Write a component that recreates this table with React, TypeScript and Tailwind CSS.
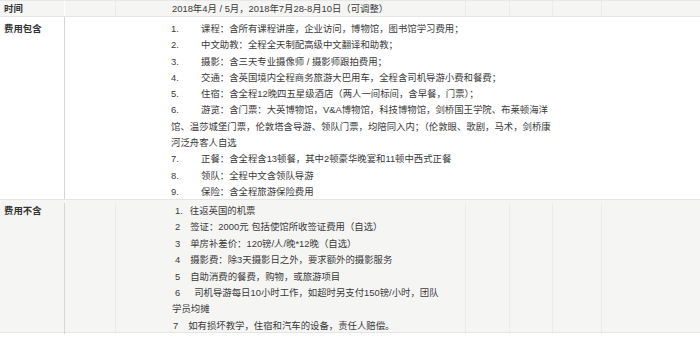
const font = { fontFamily: '"Liberation Sans", "Noto Sans CJK SC", sans-serif' }

const included: { n?: string; text: string }[] = [
  { n: '1.', text: '课程：含所有课程讲座，企业访问，博物馆，图书馆学习费用；' },
  { n: '2.', text: '中文助教：全程全天制配高级中文翻译和助教；' },
  { n: '3.', text: '摄影：含三天专业摄像师 / 摄影师跟拍费用；' },
  { n: '4.', text: '交通：含英国境内全程商务旅游大巴用车，全程含司机导游小费和餐费；' },
  { n: '5.', text: '住宿：含全程12晚四五星级酒店（两人一间标间，含早餐，门票）；' },
  { n: '6.', text: '游览：含门票：大英博物馆，V&A博物馆，科技博物馆，剑桥国王学院、布莱顿海洋' },
  { text: '馆、温莎城堡门票，伦敦塔含导游、领队门票，均陪同入内；（伦敦眼、歌剧，马术，剑桥康' },
  { text: '河泛舟客人自选' },
  { n: '7.', text: '正餐：含全程含13顿餐，其中2顿豪华晚宴和11顿中西式正餐' },
  { n: '8.', text: '领队：全程中文含领队导游' },
  { n: '9.', text: '保险：含全程旅游保险费用' },
]

const excluded: { n?: string; gap: string; text: string }[] = [
  { n: '1.', gap: 'pl-[7px]', text: '往返英国的机票' },
  { n: '2', gap: 'pl-[10px]', text: '签证：2000元 包括使馆所收签证费用（自选）' },
  { n: '3', gap: 'pl-[10px]', text: '单房补差价：120镑/人/晚*12晚（自选）' },
  { n: '4', gap: 'pl-[10px]', text: '摄影费：除3天摄影日之外，要求额外的摄影服务' },
  { n: '5', gap: 'pl-[10px]', text: '自助消费的餐费，购物，或旅游项目' },
  { n: '6', gap: 'pl-[14px]', text: '司机导游每日10小时工作，如超时另支付150镑/小时，团队' },
  { gap: '', text: '学员均摊' },
  { n: '7', gap: 'pl-[10px]', text: '如有损坏教学，住宿和汽车的设备，责任人赔偿。' },
]

function GrayRow({ label, height, children }: { label: string; height: string; children: React.ReactNode }) {
  return (
    <div className={`grid grid-cols-[65px_51px_350px_44px_43px_49px_1fr] bg-[#f5f5f4] border-b border-[#e6e6e6] ${height}`}>
      <div className="border-r border-[#d6d6d6] pl-[4px] font-bold text-[#333]">{label}</div>
      <div className="border-r border-[#ebebeb]" />
      <div className="border-r border-[#ebebeb] pl-[56px] overflow-visible whitespace-nowrap">{children}</div>
      <div className="border-r border-[#ebebeb]" />
      <div className="border-r border-[#ebebeb]" />
      <div className="border-r border-[#ebebeb]" />
      <div />
    </div>
  )
}

export default function App() {
  return (
    <div className="w-[700px] h-[339px] bg-white text-[9.4px] text-[#3a3a3a] overflow-hidden" style={font}>
      {/* 时间 */}
      <div className="border-t border-[#e8e8e8]">
        <div className="grid grid-cols-[65px_51px_350px_44px_43px_49px_1fr] bg-[#f5f5f4] border-b border-[#e6e6e6] h-[16px] leading-[15px]">
          <div className="border-r border-white pl-[4px] font-bold text-[#333]">时间</div>
          <div className="border-r border-[#ebebeb]" />
          <div className="border-r border-[#ebebeb] pl-[56px] whitespace-nowrap">2018年4月 / 5月，2018年7月28-8月10日（可调整）</div>
          <div className="border-r border-[#ebebeb]" />
          <div className="border-r border-[#ebebeb]" />
          <div className="border-r border-[#ebebeb]" />
          <div />
        </div>
      </div>

      {/* 费用包含 */}
      <div className="flex h-[183px] border-b border-[#e6e6e6] leading-[16.3px]">
        <div className="w-[65px] shrink-0 border-r border-[#d6d6d6] pl-[4px] pt-[4px] font-bold text-[#333]">费用包含</div>
        <div className="flex-1 pl-[106px] pt-[4px] whitespace-nowrap">
          {included.map((r, i) => (
            <div key={i} className="flex">
              {r.n && <span className="w-[30px] shrink-0">{r.n}</span>}
              <span>{r.text}</span>
            </div>
          ))}
        </div>
      </div>

      {/* 费用不含 */}
      <GrayRow label="费用不含" height="h-[133px] pt-[3px] leading-[16.4px]">
        <div className="-ml-[0px]">
          {excluded.map((r, i) => (
            <div key={i} className={`flex ${r.n ? 'pl-[3px]' : ''}`}>
              {r.n && <span className={`shrink-0 ${r.n === '7' ? '-ml-[2px]' : ''}`}>{r.n}</span>}
              <span className={r.gap}>{r.text}</span>
            </div>
          ))}
        </div>
      </GrayRow>
    </div>
  )
}
